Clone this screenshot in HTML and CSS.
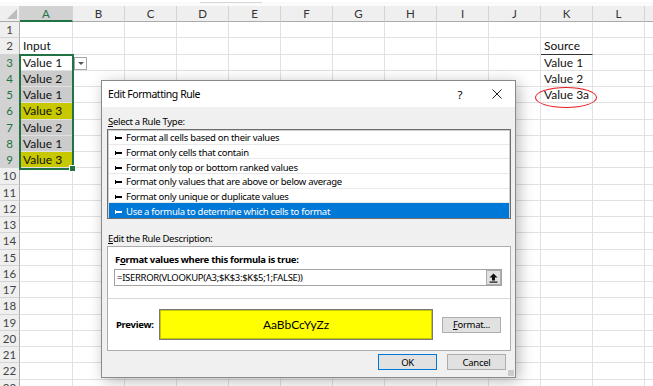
FILE: index.html
```html
<!DOCTYPE html>
<html lang="en">
<head>
    <meta charset="UTF-8">
    <title>Edit Formatting Rule</title>
    <link rel="stylesheet" href="styles.css">
</head>
<body>
    <div class="app">
        <div class="topbar"><div class="topbar-tab"></div></div>
        <div class="sheet" id="sheet"></div>

        <div class="selection"><span class="fill-handle"></span></div>
        <div class="dropdown"><span class="tri"></span></div>
        <div class="circle"></div>

        <div class="dialog">
            <div class="dlg-title">
                <span class="dlg-caption">Edit Formatting Rule</span>
                <span class="dlg-help">?</span>
                <svg class="dlg-close" width="10" height="10" viewBox="0 0 10 10"><path d="M0.5 0.5l9 9M9.5 0.5l-9 9" stroke="#222" stroke-width="1"/></svg>
            </div>
            <div class="dlg-body">
                <div class="dlg-label"><u>S</u>elect a Rule Type:</div>
                <ul class="rule-list">
                    <li><span class="arrow"></span>Format all cells based on their values</li>
                    <li><span class="arrow"></span>Format only cells that contain</li>
                    <li><span class="arrow"></span>Format only top or bottom ranked values</li>
                    <li><span class="arrow"></span>Format only values that are above or below average</li>
                    <li><span class="arrow"></span>Format only unique or duplicate values</li>
                    <li class="active"><span class="arrow"></span>Use a formula to determine which cells to format</li>
                </ul>
                <div class="dlg-label desc-label"><u>E</u>dit the Rule Description:</div>
                <div class="desc-panel">
                    <div class="panel-top">
                        <div class="bold-label">F<u>o</u>rmat values where this formula is true:</div>
                        <div class="formula">
                            <span class="formula-text">=ISERROR(VLOOKUP(A3;$K$3:$K$5;1;FALSE))</span>
                            <span class="pick">
                                <svg width="9" height="10" viewBox="0 0 9 10"><path d="M4.5 0.5L8.5 4.5H6V7.5H3V4.5H0.5Z" fill="#111"/><rect x="0.5" y="8.5" width="8" height="1.2" fill="#111"/></svg>
                            </span>
                        </div>
                    </div>
                    <div class="preview-row">
                        <span class="bold-label">Preview:</span>
                        <div class="preview">AaBbCcYyZz</div>
                        <span class="btn format-btn"><u>F</u>ormat...</span>
                    </div>
                </div>
                <div class="dlg-buttons">
                    <span class="btn default">OK</span>
                    <span class="btn">Cancel</span>
                </div>
            </div>
            <span class="grip"></span>
        </div>
    </div>

    <script>
        const cols = ['A', 'B', 'C', 'D', 'E', 'F', 'G', 'H', 'I', 'J', 'K', 'L', 'M'];
        const values = {
            A2: 'Input', A3: 'Value 1', A4: 'Value 2', A5: 'Value 1', A6: 'Value 3',
            A7: 'Value 2', A8: 'Value 1', A9: 'Value 3',
            K2: 'Source', K3: 'Value 1', K4: 'Value 2', K5: 'Value 3a'
        };
        const extra = {
            A4: 'hl-gray', A5: 'hl-gray', A7: 'hl-gray', A8: 'hl-gray',
            A6: 'hl-yellow', A9: 'hl-yellow', K2: 'src-head'
        };
        const sheet = document.getElementById('sheet');

        function add(cls, text) {
            const d = document.createElement('div');
            d.className = cls;
            if (text) d.textContent = text;
            sheet.appendChild(d);
        }

        add('corner');
        // column M is only partly in view, its letter sits off screen
        cols.forEach(c => add(c === 'A' ? 'col-head active' : 'col-head', c === 'M' ? '' : c));
        for (let r = 1; r <= 23; r++) {
            add(r >= 3 && r <= 9 ? 'row-head active' : 'row-head', String(r));
            cols.forEach(c => {
                const key = c + r;
                add('cell ' + (extra[key] || ''), values[key]);
            });
        }
    </script>
</body>
</html>
```

FILE: styles.css
```css
body {
    margin: 0;
    background: #fff;
    font-family: Lato, "Liberation Sans", sans-serif;
    overflow: hidden;
}
.app {
    position: relative;
    width: 653px;
    height: 386px;
    overflow: hidden;
}
.topbar {
    height: 6px;
    background: #fbfbfb;
    border-top: 2px solid #fff;
    box-sizing: border-box;
    display: flex;
}
.topbar-tab {
    margin-left: 200px;
    width: 62px;
    border-top: 1px solid #d6d6d6;
}

/* sheet grid */
.sheet {
    display: grid;
    grid-template-columns: 20px 53px repeat(12, 52px);
    grid-template-rows: 16px;
    grid-auto-rows: 16.25px;
}
.sheet > div {
    box-sizing: border-box;
}
.corner {
    position: relative;
    background: #efefef;
    border-right: 1px solid #d4d4d4;
    border-bottom: 1px solid #ababab;
}
.corner::after {
    content: "";
    position: absolute;
    right: 2px;
    bottom: 2px;
    border-left: 10px solid transparent;
    border-bottom: 10px solid #bdbdbd;
}
.col-head {
    background: #efefef;
    border-right: 1px solid #d4d4d4;
    border-bottom: 1px solid #ababab;
    color: #333;
    font-size: 11.5px;
    text-align: center;
    line-height: 15px;
}
.col-head.active {
    background: #d2d2d2;
    color: #217346;
    border-bottom: 2px solid #217346;
}
.row-head {
    background: #efefef;
    border-right: 1px solid #ababab;
    border-bottom: 1px solid #d4d4d4;
    color: #444;
    font-size: 11.5px;
    text-align: center;
    line-height: 16px;
}
.row-head.active {
    background: #d2d2d2;
    color: #217346;
}
.cell {
    border-right: 1px solid #e1e1e1;
    border-bottom: 1px solid #e1e1e1;
    font-size: 12px;
    color: #111;
    line-height: 16px;
    padding-left: 3px;
    white-space: nowrap;
}
.cell.hl-gray {
    background: #cbcbcb;
}
.cell.hl-yellow {
    background: #c8c800;
}
.cell.src-head {
    border-bottom: 1px solid #333;
}

/* overlays on the sheet */
.selection {
    position: absolute;
    left: 19px;
    top: 53.5px;
    width: 55px;
    height: 116px;
    border: 2px solid #217346;
    box-sizing: border-box;
}
.fill-handle {
    position: absolute;
    right: -4px;
    bottom: -4px;
    width: 5px;
    height: 5px;
    background: #217346;
    border: 1px solid #fff;
}
.dropdown {
    position: absolute;
    left: 74px;
    top: 57px;
    width: 13px;
    height: 13px;
    border: 1px solid #a6a6a6;
    background: #fff;
    box-sizing: border-box;
    display: flex;
    align-items: center;
    justify-content: center;
}
.tri {
    border-left: 3px solid transparent;
    border-right: 3px solid transparent;
    border-top: 3px solid #555;
}
.circle {
    position: absolute;
    left: 535px;
    top: 87px;
    width: 62px;
    height: 21px;
    border: 1.5px solid #e51c23;
    border-radius: 50%;
    box-sizing: border-box;
}

/* dialog */
.dialog {
    position: absolute;
    left: 101px;
    top: 80px;
    width: 415px;
    height: 298px;
    box-sizing: border-box;
    border: 1px solid #8a8a8a;
    background: #f0f0f0;
    box-shadow: 3px 3px 14px rgba(0, 0, 0, 0.28);
    font-family: "Noto Sans", sans-serif;
    font-size: 9.5px;
    letter-spacing: -0.3px;
    color: #000;
    display: flex;
    flex-direction: column;
}
.dlg-title {
    height: 26px;
    background: #fff;
    display: flex;
    align-items: center;
    padding-left: 6px;
    font-size: 10.5px;
    letter-spacing: -0.45px;
}
.dlg-caption {
    flex: 1;
}
.dlg-help {
    font-size: 11.5px;
    margin-right: 30px;
}
.dlg-close {
    margin-right: 13px;
}
.dlg-body {
    flex: 1;
    padding: 7px 4px 0 5px;
}
.dlg-label {
    line-height: 15px;
    padding-left: 1px;
}
.rule-list {
    list-style: none;
    margin: 0;
    padding: 0;
    height: 90px;
    box-sizing: border-box;
    border: 1px solid #6e6e6e;
    box-shadow: inset 0 0 0 1px #d0d0d0;
    background: #fff;
}
.rule-list li {
    height: 14.66px;
    line-height: 12px;
    box-sizing: border-box;
    padding-top: 3px;
    border-bottom: 1px solid #e9e9e9;
    margin: 0 1px;
    padding-left: 6px;
    display: flex;
    align-items: center;
    white-space: nowrap;
}
.rule-list li.active {
    background: #0078d7;
    color: #fff;
    border-bottom: none;
}
.arrow {
    width: 6px;
    height: 2px;
    background: currentColor;
    border-left: 1px solid currentColor;
    margin-right: 4px;
    position: relative;
}
.arrow::before {
    content: "";
    position: absolute;
    left: -1px;
    top: -1px;
    height: 4px;
    border-left: 1px solid currentColor;
}
.desc-label {
    margin-top: 12px;
}
.desc-panel {
    height: 105px;
    box-sizing: border-box;
    background: #fff;
    border: 1px solid #adadad;
    display: flex;
    flex-direction: column;
}
.panel-top {
    padding: 5px 8px 12px 6px;
    border-bottom: 1px solid #d9d9d9;
}
.bold-label {
    font-weight: bold;
    line-height: 15px;
    padding-left: 1px;
}
.formula {
    margin-top: 2px;
    height: 17px;
    box-sizing: border-box;
    border: 1px solid #a3a3a3;
    display: flex;
    align-items: center;
    padding-left: 2px;
}
.formula-text {
    flex: 1;
}
.pick {
    width: 15px;
    height: 15px;
    box-sizing: border-box;
    background: #e1e1e1;
    border: 1px solid #adadad;
    display: flex;
    align-items: center;
    justify-content: center;
}
.preview-row {
    flex: 1;
    display: grid;
    grid-template-columns: 44px 274px 59px;
    column-gap: 9px;
    column-gap: 0;
    align-items: center;
    padding: 0 9px 0 7px;
}
.preview {
    height: 31px;
    box-sizing: border-box;
    background: #ffff00;
    border: 1px solid #7a7a7a;
    box-shadow: inset 0 0 0 1px #c8c800;
    display: flex;
    align-items: center;
    justify-content: center;
    font-family: Lato, sans-serif;
    font-size: 12px;
    letter-spacing: 0;
}
.btn {
    display: flex;
    align-items: center;
    justify-content: center;
    width: 59px;
    height: 16px;
    box-sizing: border-box;
    background: #e1e1e1;
    border: 1px solid #adadad;
}
.format-btn {
    margin-left: 9px;
}
.btn.default {
    border-color: #0078d7;
}
.dlg-buttons {
    display: flex;
    justify-content: flex-end;
    gap: 10px;
    margin-top: 3px;
    padding-right: 5px;
}
.grip {
    position: absolute;
    right: 1px;
    bottom: 1px;
    width: 6px;
    height: 6px;
    background: radial-gradient(circle, #a0a0a0 0.6px, transparent 0.8px) 0 0 / 2px 2px;
}
```
